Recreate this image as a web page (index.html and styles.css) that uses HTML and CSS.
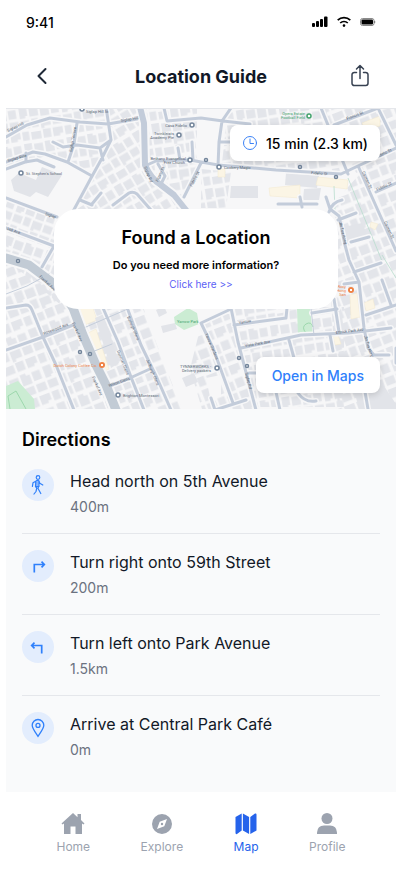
FILE: index.html
```html
<!DOCTYPE html>
<html lang="en">
<head>
<meta charset="utf-8">
<meta name="viewport" content="width=device-width, initial-scale=1">
<title>Location Guide</title>
<link rel="stylesheet" href="styles.css">
</head>
<body>
<div class="status-bar">
  <span class="clock">9:41</span>
  <div class="status-icons">
    <svg width="16" height="12" viewBox="0 0 16 12"><rect x="0" y="7" width="3" height="4" rx="1"/><rect x="4" y="5" width="3" height="6" rx="1"/><rect x="8" y="3" width="3" height="8" rx="1"/><rect x="12" y="0.5" width="3.500" height="10.5" rx="1"/></svg>
    <svg width="14" height="12" viewBox="0 0 14 12" fill="none" stroke="#000" stroke-width="1.7"><path d="M.7 4.2a9 9 0 0 1 12.6 0M3.2 7a5.6 5.6 0 0 1 7.6 0"/><circle cx="7" cy="9.6" r="1.3" fill="#000" stroke="none"/></svg>
    <svg width="16" height="12" viewBox="0 0 16 12"><rect x=".5" y="2.5" width="13.5" height="7" rx="2" fill="#fff" stroke="#8a8a8a"/><rect x="1.500" y="3.500" width="11.500" height="5" rx="1"/><path d="M14.6 4.5q1.4 1.5 0 3z"/></svg>
  </div>
</div>

<header class="header">
  <button class="icon-button" aria-label="Back"><svg width="20" height="20" viewBox="0 0 20 20" fill="none" stroke="#1f2937" stroke-width="2" stroke-linecap="round" stroke-linejoin="round"><path d="M13.5 3 6.5 10l7 7"/></svg></button>
  <h1>Location Guide</h1>
  <button class="icon-button" aria-label="Share"><svg width="20" height="24" viewBox="0 0 20 24" fill="none" stroke="#374151" stroke-width="1.5" stroke-linecap="round" stroke-linejoin="round"><path d="M6.5 8.5H4.2A2.2 2.2 0 0 0 2 10.700v8.600a2.200 2.200 0 0 0 2.200 2.200h11.600a2.200 2.200 0 0 0 2.200-2.200v-8.600a2.200 2.200 0 0 0-2.200-2.200h-2.300M10 14.500V1.500M6.500 5 10 1.500 13.500 5"/></svg></button>
</header>

<section class="map" aria-label="Map">
  <svg class="map-art" viewBox="6 109 390 300" preserveAspectRatio="xMidYMid slice">
    <defs>
      <g id="lots" fill="#e3e5ea"><path d="M1 1h7v8h-2v2h-5zM10 2h8v8h-8zM20 1h5v2h3v8h-8zM30 2h7v8h-7zM1 13h8v7h-8zM11 12h6v8h-6zM19 13h9v7h-6v2h-3zM30 13h8v7h-8zM1 23h6v8h-6zM9 24h9v7h-9zM20 23h7v8h-7zM29 23h9v6h-3v2h-6z"/></g>
      <pattern id="a" width="39" height="33" patternUnits="userSpaceOnUse" patternTransform="rotate(-9) scale(1.1)"><use href="#lots"/></pattern>
      <pattern id="b" width="39" height="33" patternUnits="userSpaceOnUse" patternTransform="rotate(-31) scale(1.1)"><use href="#lots"/></pattern>
      <pattern id="c" width="39" height="33" patternUnits="userSpaceOnUse" patternTransform="rotate(20) scale(1.1)"><use href="#lots"/></pattern>
      <pattern id="d" width="39" height="33" patternUnits="userSpaceOnUse" patternTransform="rotate(-21) scale(1.2)"><use href="#lots"/></pattern>
      <path id="streets" d="M6 137l21-12 23-7 30 4 28 2 29-5M106 107l5 33-10 20-10 18-28 52M77 123l-3 21-6 18M53 142l10 5 14-2 23 3 11-8M100 148l3 12M6 162l27-10 12 2 22 8 25 14M6 169l19-7 12-2 17 7M26 153v9M6 198l51 19M6 228l48 18-12 21M164 108l3 13 34-3 22 3 27 3M231 108l-9 13-3 21-1 24M219 142h16M147 165l9-4 34-1 28 5 58 5 65 4 55-26M158 164l7 12-5 10M201 163l-17 34M178 148l2 12M192 142l1 18M113 205l16-12q4-2 8 1l14 16M80 200l12 5M101 193l-9 11M278 204h39M300 197l2 10M326 197l4 12 9 7 6 29 4 15 10 22 5 46 4 20 6 7h15M329 212q3-10 13-12M338 220l18-7M351 242l18-5M321 108l27 66M378 108l18 37M334 125l44-17M359 168l37 83M376 192l20-9M344 284l15-2M354 272l27-9M382 280l9 25M366 315l30-10M6 308l20-3q4 0 6 5l11 27 13 28 18 45M6 350l37-13 35-14M103 308l15 34 13 35 13 33M128 310l13 35 16 33 14 32M107 387l23-9 22-10M201 323l30-14M201 323l12 25 20 55M231 308l7 34 18 68M234 325l52-7 1-10M241 348l60-13 47-2 43-5M289 340l5 18M334 299l5 33M312 313l25-4M330 335l3 16M298 393q7 10 18 8M276 392l4 18M364 386l4 23M211 398l4 12 31-10M396 348v15M249 373h12"/>
      <path id="siglap" d="M140 107l4 16 1 42q6 14 16 20l13 10 16 20"/>
      <path id="frankel" d="M6 258l23 7 20 15 14 12 10 16 10 27 13 30 10 20 10 25"/>
    </defs>
    <rect x="6" y="109" width="390" height="300" fill="#f7f7f8"/>
    <path fill="url(#a)" d="M6 109h102l4 30-20 37-45-20-41 10z"/>
    <path fill="url(#b)" d="M108 109h34l4 57 40 44H75l35-70z"/>
    <path fill="url(#a)" d="M142 109h55v70l-14 20-36-34z"/>
    <path fill="url(#c)" d="M6 199l62 22v90L6 259z"/>
    <path fill="url(#d)" d="M6 262l50 26 60 122H6z"/>
    <path fill="url(#d)" d="M75 307h68l14 38 25 64h-78z"/>
    <path fill="url(#d)" d="M318 109h78v300h-58l-8-125v-77l28-31z"/>
    <path fill="url(#a)" d="M228 109h98l14 62-118-8zM234 307h110v100h-88zM201 169l30 3-5 36h-25z"/>
    <path fill="url(#d)" d="M201 325l28-14 25 98h-52l-12-40z"/>

    <g fill="#e2e4e9">
      <path d="M11 180l8-7 17 7 6-13 20 8-14 22-12-5-6 5-16-6z"/>
      <path d="M231 186h27v12h-28zM286 173l33 3-2 12-32-3zM304 189l17-1-2 12h-16zM161 326l14-3 2 6-14 4zM156 310l8-4 3 7-8 4zM354 390l30-4 12 18v5h-37zM339 228l23-5 7 15-24 6zM182 378l12-5 4 9-12 5z"/>
    </g>
    <g fill="#f7f7f8"><path d="M206 378l15-3v22h-11zM302 370h25v20h-19z"/></g>
    <g fill="#fbf5e5" stroke="#f3e9cf" stroke-width=".5">
      <path d="M74 309l19-1 4 12-15 6zM82 336l14-7 13 40-9 4zM269 188l31-3v13l-30-2zM318 177l30 3-1 9-31-4zM362 123l18-7v10l-15 4zM350 295l7-2 3 24-9 2zM364 303l9-4 2 9-9 3zM333 336l5-1 3 9-6 1zM371 222l7 2-3 6-5-3zM218 169h7v8h-7z"/>
    </g>
    <path fill="#e2e4e9" d="M95 318l9-4 15 49-8 5z"/>
    <g fill="#cbecd3"><path d="M174 317l14-9 9 5 2 11-15 6-9-6zM297 309h13l3 26h-15zM6 386l12-5 16 18 1 10H6z"/></g>
    <path d="M10 409l-2-13 8-5 10 18M306 333q-5-6 0-9t7 3" fill="none" stroke="#9dd8ad"/>
    <g fill="none" stroke="#b9ddce" stroke-width=".8"><path d="M334 186l1 25M348 178l34 83M382 255l14 23"/></g>

    <g fill="none" stroke-linejoin="round" stroke-linecap="round">
      <use href="#streets" stroke="#f7f7f8" stroke-width="6"/>
      <use href="#siglap" stroke="#f7f7f8" stroke-width="10"/>
      <use href="#frankel" stroke="#f7f7f8" stroke-width="13"/>
      <path d="M86 327l44-19M6 294l21-8 22-12M92 352l20-8M311 309l3 26" stroke="#c5cedb"/>
      <use href="#streets" stroke="#c3ccda" stroke-width="3"/>
      <use href="#siglap" stroke="#c3ccda" stroke-width="6"/>
      <use href="#frankel" stroke="#c2cbd5" stroke-width="9"/>
    </g>

    <g class="poi">
      <circle cx="82" cy="109" r="2"/><circle cx="192" cy="125" r="2"/><circle cx="179" cy="135" r="2"/><circle cx="190" cy="160" r="2"/><circle cx="21" cy="173" r="2"/><circle cx="219" cy="167" r="2"/><circle cx="206" cy="160" r="1.500"/><circle cx="300" cy="167" r="1.500"/><circle cx="336" cy="177" r="1.500"/><circle cx="18" cy="261" r="1.500"/><circle cx="80" cy="352" r="1.500"/><circle cx="90" cy="354" r="1.500"/><circle cx="118" cy="395" r="2"/><circle cx="217" cy="368" r="2"/><circle cx="239" cy="358" r="1.500"/><circle cx="247" cy="366" r="1.500"/>
    </g>
    <circle cx="309" cy="116" r="2" fill="#fff" stroke="#43a36d" stroke-width="1.500"/>
    <circle cx="102" cy="365" r="3" fill="#ef8244"/><circle cx="351" cy="290" r="3" fill="#ef8244"/>
    <path d="M101 364h2v2h-2zM350 289h2v2h-2z" fill="#fff"/>
    <g class="map-label">
      <text x="86" y="113">Siglap Hill St</text>
      <text x="187" y="127" text-anchor="end">Casa Fidelio</text>
      <text x="174" y="135" text-anchor="end">Twinkleists</text><text x="174" y="139" text-anchor="end">Academy Pte</text>
      <text x="186" y="160" text-anchor="end">Bethany Evangelical</text><text x="185" y="164" text-anchor="end">Free Church</text>
      <text x="26" y="175">St. Stephen's School</text>
      <text x="224" y="169">Cookery Magic</text>
      <text x="311" y="174" transform="rotate(4 311 174)">Fidelio St</text>
      <text x="123" y="397">Brighton Montessori</text>
      <text x="211" y="368" text-anchor="end">TYNNERWORKS -</text><text x="211" y="372" text-anchor="end">Delivery packers</text>
      <text x="8" y="132" transform="rotate(-25 8 132)">Siglap Hill</text>
      <text x="8" y="162" transform="rotate(-16 8 162)">Siglap Rise</text>
      <text x="72" y="152" transform="rotate(-80 72 152)">Siglap Terrace</text>
      <text x="121" y="122" transform="rotate(-10 121 122)">Siglap Hill</text>
      <text x="144" y="167" transform="rotate(68 144 167)">Siglap Rd</text>
      <text x="158" y="182" transform="rotate(-65 158 182)">Figaro St</text>
      <text x="192" y="187" transform="rotate(-62 192 187)">Fidelio St</text>
      <text x="45" y="215" transform="rotate(18 45 215)">Siglap</text>
      <text x="7" y="230" transform="rotate(18 7 230)">Hill Ave</text>
      <text x="39" y="277" transform="rotate(43 39 277)">Frankel Ave</text>
      <text x="72" y="323" transform="rotate(67 72 323)">Frankel Ave</text>
      <text x="92" y="377" transform="rotate(67 92 377)">Frankel Ave</text>
      <text x="44" y="335" transform="rotate(-21 44 335)">Rosewood Ave</text>
      <text x="109" y="387" transform="rotate(-19 109 387)">Wilton Glens</text>
      <text x="117" y="351" transform="rotate(68 117 351)">Dunman Glens</text>
      <text x="127" y="317" transform="rotate(67 127 317)">Burleigh Glens</text>
      <text x="146" y="360" transform="rotate(67 146 360)">Jedburgh Glens</text>
      <text x="205" y="334" transform="rotate(67 205 334)">Yarrow Gardens</text>
      <text x="239" y="324" transform="rotate(-9 239 324)">Yarrow</text>
      <text x="245" y="347" transform="rotate(-9 245 347)">Vista Park Ave</text>
      <text x="336" y="334" transform="rotate(-7 336 334)">Ettrick Park Ave</text>
      <text x="364" y="336" transform="rotate(72 364 336)">Jln Tua Kong</text>
      <text x="245" y="373" transform="rotate(75 245 373)">Siglap Rd</text>
      <text x="339" y="222" transform="rotate(76 339 222)">Jln Tua Kong</text>
      <text x="362" y="172" transform="rotate(65 362 172)">Carmen St</text>
      <text x="384" y="222" transform="rotate(65 384 222)">Carmen St</text>
      <text x="377" y="158" transform="rotate(-25 377 158)">Fidelio St</text>
      <text x="347" y="120" transform="rotate(-21 347 120)">Francis St</text>
      <text x="377" y="191" transform="rotate(-24 377 191)">Fidelio St</text>
      <g fill="#43a36d"><text x="305" y="115" text-anchor="end">Opera Estate</text><text x="305" y="119" text-anchor="end">Football Field</text><text x="177" y="323">Yarrow Park</text></g>
      <g fill="#ef8244"><text x="97" y="367" text-anchor="end">Dutch Colony Coffee Co.</text><text x="346" y="288" text-anchor="end">Roxy</text><text x="346" y="292" text-anchor="end">Hong</text><text x="346" y="296" text-anchor="end">San</text></g>
    </g>
  </svg>

  <p class="eta"><svg width="16" height="16" viewBox="0 0 16 16" fill="none" stroke="#3b82f6" stroke-linecap="round"><circle cx="8" cy="8" r="6.500"/><path d="M8 4v4.500h3.500"/></svg>15 min (2.3 km)</p>
  <div class="found">
    <h2>Found a Location</h2>
    <p>Do you need more information?</p>
    <a href="#info">Click here &gt;&gt;</a>
  </div>
  <button class="open-maps">Open in Maps</button>
</section>

<main class="directions">
  <h2>Directions</h2>
  <ol>
    <li><span class="badge"><svg width="20" height="20" viewBox="0 0 20 20" fill="none" stroke="#2f80fb" stroke-width="1.200" stroke-linecap="round" stroke-linejoin="round"><circle cx="10" cy="2.500" r="1.800"/><path d="M7.800 6.200Q9.500 4.500 11 6l.8 2.200 3 1.800M7.800 6.200 5 7.800l-.6 3.500M7.800 6.200l-.3 5.300 1.300 1.500-.8 3.500-2 2.500M8 11.500l3 0-.1-5.500M10.500 11.500l-.5 2 2.800 5"/><path d="M8 6.500l2.500-.5.300 5.500H8z" fill="#2f80fb" fill-opacity=".5" stroke="none"/></svg></span><div><h3>Head north on 5th Avenue</h3><p>400m</p></div></li>
    <li><span class="badge"><svg width="20" height="20" viewBox="0 0 20 20" fill="none" stroke="#2f80fb" stroke-width="1.700"><path d="M6.300 16.500V8.500H16M13.500 5.700l2.800 2.800-2.800 2.800"/></svg></span><div><h3>Turn right onto 59th Street</h3><p>200m</p></div></li>
    <li><span class="badge"><svg width="20" height="20" viewBox="0 0 20 20" fill="none" stroke="#2f80fb" stroke-width="1.700"><path d="M13.700 16.500V8.500H4M6.500 5.700 3.700 8.500l2.800 2.800"/></svg></span><div><h3>Turn left onto Park Avenue</h3><p>1.5km</p></div></li>
    <li><span class="badge"><svg width="20" height="20" viewBox="0 0 20 20" fill="none" stroke="#2f80fb" stroke-width="1.300"><path d="M10 18.300C8 15.300 4.200 10.500 4.200 7.300a5.800 5.800 0 0 1 11.600 0c0 3.200-3.800 8-5.800 11z"/><circle cx="10" cy="7.400" r="2"/></svg></span><div><h3>Arrive at Central Park Café</h3><p>0m</p></div></li>
  </ol>
</main>

<nav class="tabs">
  <a href="#home"><svg width="24" height="24" viewBox="0 0 24 24" fill="currentColor"><path d="M12 1 .5 11.500l1 1L3 11.600V22h6.500v-7.500h5V22H21V11.600l1.500.9 1-1L20 8V2h-3.500v3.200z"/></svg>Home</a>
  <a href="#explore"><svg width="24" height="24" viewBox="0 0 24 24" fill="currentColor"><path fill-rule="evenodd" d="M12 2a10 10 0 1 0 0 20 10 10 0 0 0 0-20zm5 5-2.700 7.300L7 17l2.700-7.300zm-5 3.800a1.200 1.200 0 1 0 0 2.400 1.200 1.200 0 0 0 0-2.400z"/></svg>Explore</a>
  <a href="#map" class="active" aria-current="page"><svg width="24" height="24" viewBox="0 0 24 24" fill="currentColor"><path d="M1.500 5 7.700 1.500v17L3 22q-1.500.5-1.500-1zM8.900 1.500l6.200 3.500v17l-6.200-3.500zM16.300 5 21 1.500q1.500-.5 1.500 1V18.500L16.300 22z"/></svg>Map</a>
  <a href="#profile"><svg width="24" height="24" viewBox="0 0 24 24" fill="currentColor"><circle cx="12" cy="6.500" r="5.500"/><path d="M2 22v-1.500Q2.500 13.500 9 13.500h6q6.500 0 7 7V22z"/></svg>Profile</a>
</nav>
</body>
</html>
```
FILE: styles.css
```css
* {
  box-sizing: border-box;
}

body {
  margin: 0;
  padding: 0 6px;
  min-height: 100vh;
  display: flex;
  flex-direction: column;
  background: #fff;
  font-family: Inter, "Liberation Sans", sans-serif;
  color: #000;
}

h1, h2, h3, p, ol {
  margin: 0;
  padding: 0;
}

button {
  border: 0;
  font: inherit;
}

svg {
  display: block;
}

a {
  text-decoration: none;
}

.status-bar {
  display: flex;
  justify-content: space-between;
  align-items: center;
  height: 44px;
  padding: 0 20px;
}

.clock {
  font-size: 14px;
  font-weight: 500;
}

.status-icons {
  display: flex;
  gap: 9px;
}

.header {
  display: flex;
  justify-content: space-between;
  align-items: center;
  height: 65px;
  padding: 0 24px;
  border-bottom: 1px solid #e5e7eb;
}

.header h1 {
  font-size: 18px;
  font-weight: 700;
  color: #111827;
}

.icon-button {
  display: grid;
  place-items: center;
  width: 24px;
  height: 24px;
  padding: 0;
  background: none;
}

.map {
  position: relative;
  height: 300px;
  display: grid;
  place-items: center;
  overflow: hidden;
}

.map-art {
  position: absolute;
  inset: 0;
  width: 100%;
  height: 100%;
}

.poi circle {
  fill: #fff;
  stroke: #73859b;
  stroke-width: 1.5px;
}

.map-label {
  font-family: Roboto, sans-serif;
  font-size: 4px;
  fill: #5b6875;
}

.eta, .open-maps {
  position: absolute;
  right: 16px;
  display: flex;
  align-items: center;
  height: 36px;
  border-radius: 8px;
  background: #fff;
  box-shadow: 0 2px 6px rgba(0, 0, 0, 0.15);
  font-weight: 500;
}

.eta {
  top: 16px;
  gap: 8px;
  padding: 0 12px;
  font-size: 14px;
}

.open-maps {
  bottom: 16px;
  padding: 0 16px;
  font-size: 14px;
  color: #2f80fb;
}

.found {
  position: relative;
  width: 284px;
  height: 100px;
  margin-right: 10px;
  padding-top: 16px;
  border-radius: 24px;
  background: #fff;
  text-align: center;
}

.found h2 {
  font-size: 18px;
  line-height: 26px;
  font-weight: 600;
}

.found p {
  padding-top: 6px;
  font-size: 11px;
  line-height: 16px;
  font-weight: 600;
}

.found a {
  display: block;
  padding: 3px 0 0 10px;
  font-size: 10px;
  line-height: 16px;
  color: #5b5ff5;
}

.directions {
  flex: 1;
  padding: 16px;
  background: #f9fafb;
}

.directions h2 {
  font-size: 18px;
  line-height: 30px;
  font-weight: 600;
}

.directions ol {
  list-style: none;
}

.directions li {
  display: flex;
  gap: 16px;
  padding: 16px 0;
  border-bottom: 1px solid #e5e7eb;
}

.directions li:first-child {
  padding-top: 14px;
}

.directions li:last-child {
  border-bottom: 0;
}

.badge {
  display: grid;
  place-items: center;
  flex: none;
  width: 32px;
  height: 32px;
  border-radius: 50%;
  background: #e3edfd;
}

.directions h3 {
  font-size: 16px;
  line-height: 24px;
  font-weight: 400;
  color: #111827;
}

.directions li p {
  padding-top: 4px;
  font-size: 14px;
  line-height: 20px;
  color: #6b7280;
}

.tabs {
  display: flex;
  justify-content: space-evenly;
  height: 86px;
  padding-top: 20px;
}

.tabs a {
  display: flex;
  flex-direction: column;
  align-items: center;
  gap: 4px;
  font-size: 12px;
  line-height: 14px;
  color: #9ca3af;
}

.tabs .active {
  color: #2563eb;
}
```
